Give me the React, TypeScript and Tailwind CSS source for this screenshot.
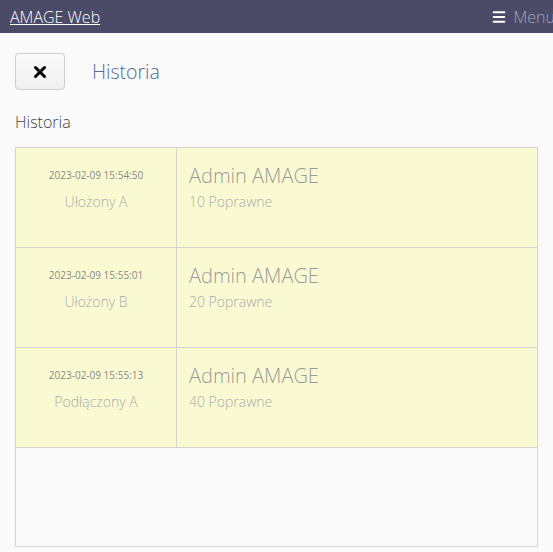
import { Menu, X } from "lucide-react"

const rows = [
	{ date: "2023-02-09 15:54:50", state: "Ułożony A", user: "Admin AMAGE", result: "10 Poprawne" },
	{ date: "2023-02-09 15:55:01", state: "Ułożony B", user: "Admin AMAGE", result: "20 Poprawne" },
	{ date: "2023-02-09 15:55:13", state: "Podłączony A", user: "Admin AMAGE", result: "40 Poprawne" },
]

export default function App() {
	return (
		<div className="min-h-[552px] bg-[#fafafa] font-['Open_Sans',sans-serif] font-light overflow-hidden">
			{/* Top bar */}
			<div className="h-[33px] bg-[#4b4a67] flex items-center justify-between pl-[10px] overflow-hidden">
				<a className="text-white text-[16px] underline leading-none">AMAGE Web</a>
				<div className="flex items-center gap-[7px] mr-[-2px] text-[#a5a5bd] text-[16px]">
					<Menu className="size-[16px] text-white" strokeWidth={3} />
					<span>Menu</span>
				</div>
			</div>

			<div className="px-[15px]">
				{/* Title row */}
				<div className="flex items-center gap-[27px] mt-[20px]">
					<button className="w-[50px] h-[37px] flex items-center justify-center rounded-[4px] border border-[#cfcfcf] bg-gradient-to-b from-[#fbfbfb] to-[#f0f0f0]">
						<X className="size-[18px] text-black" strokeWidth={4} />
					</button>
					<h1 className="text-[19.5px] text-[#50699a]">Historia</h1>
				</div>

				<div className="mt-[20px] text-[16px] text-[#444]">Historia</div>

				{/* History list */}
				<div className="mt-[13px] h-[400px] w-[523px] border border-[#d4d4d4] bg-[#fafafa]">
					{rows.map((r, i) => (
						<div key={i} className="flex h-[100px] bg-[#fafad2] border-b border-[#d4d4d4]">
							<div className="w-[161px] shrink-0 border-r border-[#d4d4d4] flex flex-col items-center pt-[20px]">
								<div className="text-[10px] text-[#888] leading-[14px] font-normal">{r.date}</div>
								<div className="text-[14px] text-[#aaa] mt-[9px]">{r.state}</div>
							</div>
							<div className="flex-1 pl-[12px] pt-[14px]">
								<div className="text-[20px] text-[#9a9a9a] leading-[28px]">{r.user}</div>
								<div className="text-[14px] text-[#aaa] mt-[1px]">{r.result}</div>
							</div>
						</div>
					))}
				</div>
			</div>
		</div>
	)
}
